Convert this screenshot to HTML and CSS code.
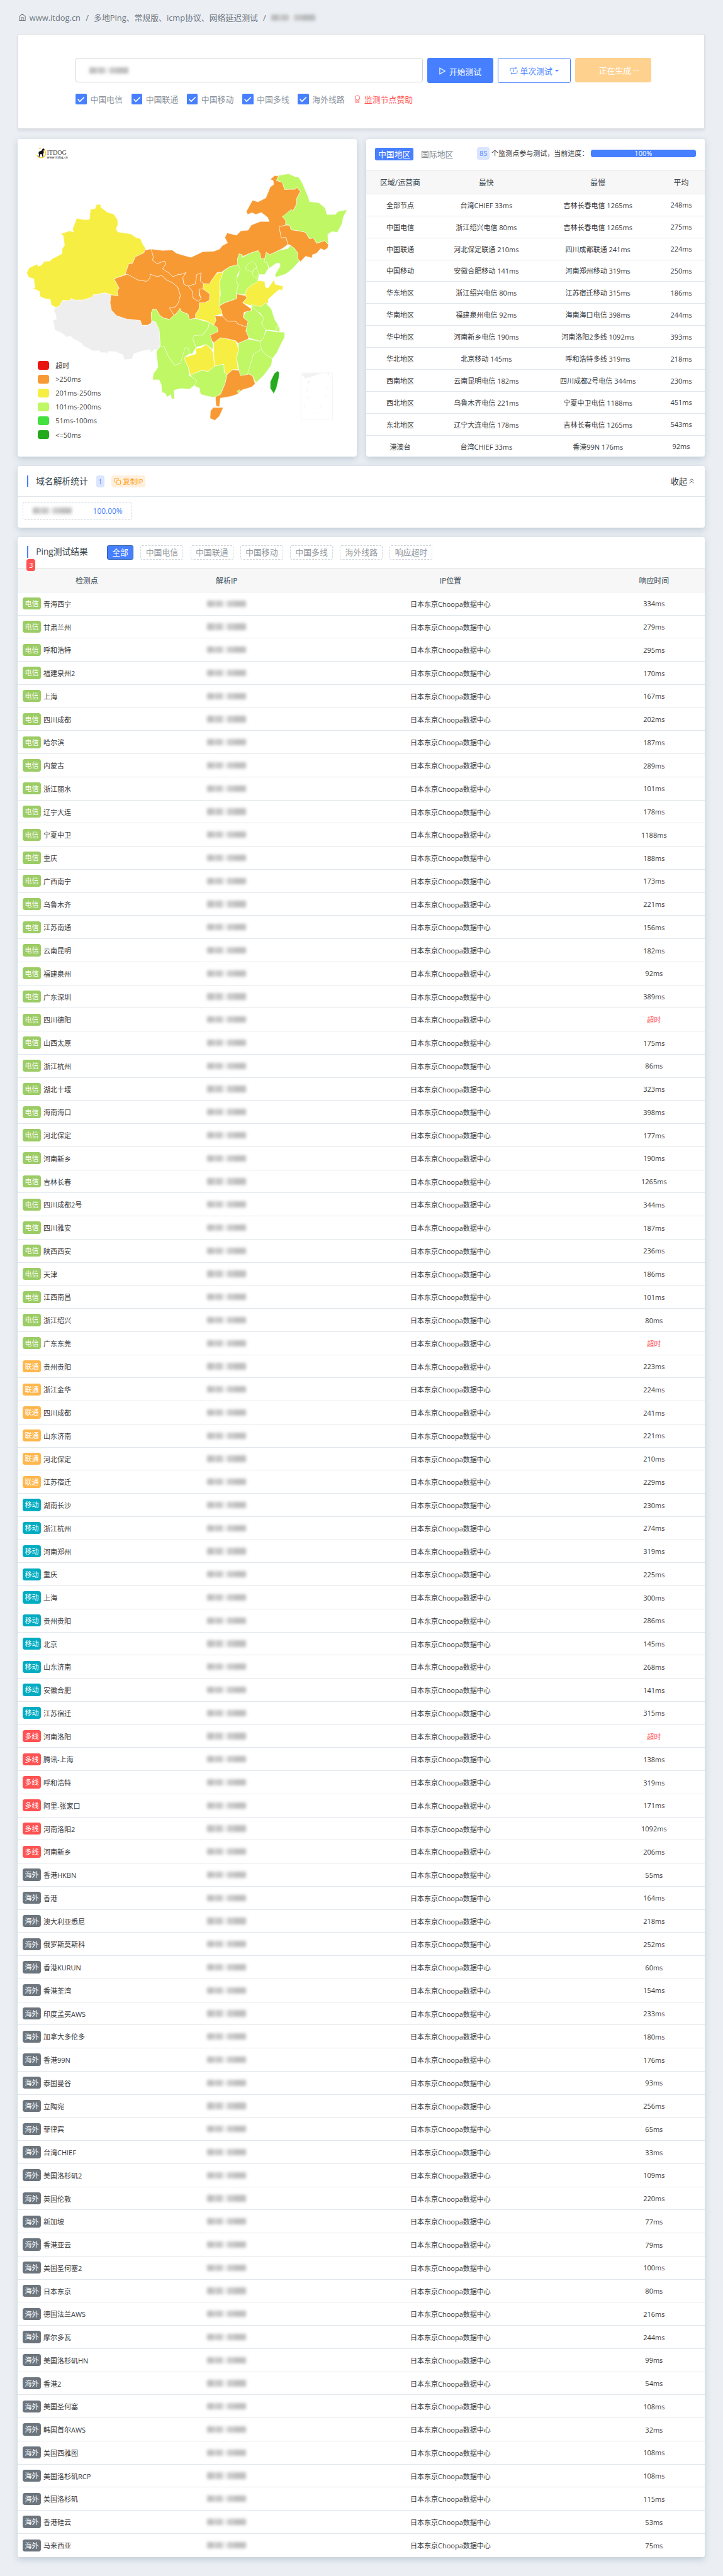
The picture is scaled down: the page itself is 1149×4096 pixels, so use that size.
FILE: index.html
```html
<!DOCTYPE html>
<html lang="zh-CN">
<head>
<meta charset="utf-8">
<title>多地Ping、常规版、icmp协议、网络延迟测试</title>
<link rel="stylesheet" href="styles.css">
</head>
<body>
<div class="page">
  <nav class="crumbs">
    <svg class="home" viewBox="0 0 13 14"><path d="M1 5.5 6.5 1 12 5.5V13H1zM4.7 13V7.5h3.6V13"/></svg>
    <span>www.itdog.cn</span><i>/</i><span>多地Ping、常规版、icmp协议、网络延迟测试</span><i>/</i><b class="smudge wide"></b>
  </nav>

  <section class="card search">
    <div class="bar">
      <div class="input"><b class="smudge"></b></div>
      <button class="btn start"><svg viewBox="0 0 11 12"><path d="M1 .8 10 6 1 11.2z"/></svg>开始测试</button>
      <button class="btn once"><svg viewBox="0 0 14 14"><path d="M1 8V4.500q0-2 2-2h8.500M10 .8l2 1.700-2 1.700M13 6v3.500q0 2-2 2H2.500M4 9.800l-2 1.700 2 1.700M6 5.800l1-.8v4.200"/></svg>单次测试<em></em></button>
      <button class="btn making">正在生成<span>···</span></button>
    </div>
    <div class="checks">
      <label><svg viewBox="0 0 19 19"><path d="m4 9.500 3.500 3.800L15 6"/></svg>中国电信</label>
      <label><svg viewBox="0 0 19 19"><path d="m4 9.500 3.500 3.800L15 6"/></svg>中国联通</label>
      <label><svg viewBox="0 0 19 19"><path d="m4 9.500 3.500 3.800L15 6"/></svg>中国移动</label>
      <label><svg viewBox="0 0 19 19"><path d="m4 9.500 3.500 3.800L15 6"/></svg>中国多线</label>
      <label><svg viewBox="0 0 19 19"><path d="m4 9.500 3.500 3.800L15 6"/></svg>海外线路</label>
      <a class="sponsor"><svg viewBox="0 0 11 15"><circle cx="5.500" cy="5" r="4"/><path d="M2.800 8v6l2.700-1.800L8.200 14V8M2.800 10.800h5.400"/></svg>监测节点赞助</a>
    </div>
  </section>

  <div class="split">
    <section class="card map">
      <svg class="china" viewBox="28 14 1532 1526" preserveAspectRatio="none">
        <g class="gray"><path d="M198 822 215 818 232 788 262 790 270 779 285 787 322 787 365 773 370 762 425 752 450 762 446 800 452 835 475 862 520 878 583 885 590 908 615 908 632 898 635 885 652 893 668 930 673 1000 660 1032 650 1022 632 1040 625 1025 590 1032 553 1045 545 1070 510 1074 505 1050 470 1035 437 1033 433 1058 430 1040 405 1040 395 1030 370 1032 345 1018 325 1008 318 995 275 970 268 960 250 965 230 948 195 930 192 900 186 885 203 880 200 855 192 840z"/></g>
        <g class="yellow">
          <path d="M69 657 80 633 115 615 122 625 135 620 150 601 175 600 183 590 228 565 230 540 240 525 234 478 222 470 263 455 280 461 277 445 295 395 335 402 353 399 357 352 378 348 385 328 405 329 403 340 432 365 463 375 480 402 481 425 474 445 480 460 540 470 565 488 583 492 592 515 607 540 600 560 560 580 548 610 530 614 514 665 464 685 487 730 478 745 482 767 450 762 425 752 370 762 365 773 322 787 285 787 270 779 262 790 232 788 215 818 198 822 180 810 176 784 150 780 130 770 126 745 95 730 107 728 101 685 78 678z"/>
          <path d="M868 708 895 710 915 675 935 655 958 655 942 700 942 800 952 855 920 862 925 885 915 908 895 895 875 885 832 875 832 855 848 830 850 800 875 800 895 788 897 758 865 733z"/>
          <path d="M1055 760 1065 735 1085 715 1115 693 1145 698 1148 725 1160 730 1187 690 1193 712 1228 720 1225 740 1210 737 1190 755 1160 785 1162 800 1130 818 1095 815 1075 812 1045 800 1065 775z"/>
          <path d="M915 992 945 968 985 975 1015 985 1028 1025 1018 1065 1025 1120 1000 1122 975 1145 962 1135 960 1095 918 1105 915 1050z"/>
          <path d="M783 1062 835 1045 832 1020 860 1015 880 1000 905 1025 912 1040 918 1105 890 1130 860 1125 808 1148 800 1110 785 1080z"/>
        </g>
        <g class="orange">
          <path d="M464 685 525 663 545 675 570 690 610 697 625 685 628 663 660 675 680 668 700 690 730 705 752 725 764 765 755 800 742 820 715 825 735 860 715 880 690 875 670 860 655 832 640 830 632 850 634 885 632 898 615 908 590 908 583 885 520 878 475 862 452 835 446 800 450 762 482 767 478 745 487 730z"/>
          <path d="M602 548 632 542 642 582 637 595 658 612 693 600 698 615 683 637 712 657 730 675 752 665 768 663 790 655 775 680 780 712 800 720 818 745 822 778 845 793 858 780 853 765 848 735 865 733 897 758 895 788 875 800 850 800 848 830 832 855 832 875 805 880 798 855 768 842 762 828 748 850 735 860 715 825 742 820 755 800 764 765 752 725 730 705 700 690 680 668 660 675 628 663 625 685 610 697 570 690 545 675 525 663 514 665 530 614 548 610 560 580 600 560z"/>
          <path d="M632 542 683 549 727 547 745 562 780 573 812 582 865 555 915 553 940 543 955 525 977 513 965 487 975 465 1018 476 1037 455 1070 452 1085 427 1125 410 1166 410 1158 390 1130 367 1105 376 1088 368 1068 376 1062 362 1090 308 1115 316 1150 297 1170 245 1186 232 1183 213 1170 208 1190 190 1208 192 1198 213 1225 222 1235 256 1283 255 1290 246 1307 265 1290 300 1290 325 1273 360 1225 387 1240 405 1240 428 1210 435 1220 488 1242 487 1250 520 1225 540 1168 570 1152 558 1146 590 1128 588 1115 550 1080 562 1040 580 1030 565 1022 590 1025 617 985 628 950 653 930 655 905 692 895 710 868 708 853 695 857 657 838 665 832 710 800 720 780 712 775 680 790 655 768 663 752 665 730 675 712 657 683 637 698 615 693 600 658 612 637 595 642 582z"/>
          <path d="M800 720 832 710 838 665 857 657 853 695 868 708 865 733 848 735 850 765 858 780 845 793 822 778 818 745z"/>
          <path d="M1210 435 1240 428 1258 428 1265 450 1300 455 1330 462 1348 493 1365 488 1380 515 1415 502 1433 520 1430 537 1415 548 1398 540 1380 563 1360 570 1360 585 1330 577 1307 603 1295 590 1293 560 1280 540 1262 525 1250 520 1242 487 1220 488z"/>
          <path d="M940 815 965 800 1018 780 1018 758 1055 765 1065 775 1045 800 1085 830 1080 842 1052 845 1048 870 1070 890 1065 918 1020 900 1015 890 975 888 955 865 950 840z"/>
          <path d="M920 862 955 865 975 888 1015 890 1020 900 1065 918 1060 935 1073 965 1070 975 1025 995 1015 983 985 975 945 968 915 992 895 970 898 955 935 935 915 908 925 885z"/>
          <path d="M975 1145 1000 1122 1035 1125 1045 1148 1070 1142 1090 1150 1102 1190 1085 1205 1045 1218 1020 1240 990 1250 945 1258 940 1300 925 1295 922 1250 945 1240 965 1190z"/>
          <path d="M912 1303 958 1303 940 1345 920 1365 898 1355 900 1320z"/>
        </g>
        <g class="lime">
          <path d="M1203 190 1253 181 1283 195 1298 197 1315 225 1340 288 1348 315 1390 320 1418 345 1427 377 1465 376 1475 363 1518 353 1500 390 1495 420 1473 463 1450 458 1430 472 1433 520 1415 502 1380 515 1365 488 1348 493 1330 462 1300 455 1265 450 1258 428 1240 425 1240 405 1225 387 1265 352 1273 360 1290 325 1290 300 1307 265 1290 246 1283 255 1235 256 1225 222 1198 213 1208 195z"/>
          <path d="M1262 525 1280 540 1293 560 1295 590 1302 600 1268 640 1240 662 1195 678 1192 665 1215 625 1213 610 1198 610 1165 635 1158 612 1142 600 1152 558 1168 570 1212 548 1250 540z"/>
          <path d="M1022 590 1030 565 1045 570 1043 583 1080 562 1115 550 1125 565 1128 588 1146 590 1142 600 1158 612 1162 635 1145 665 1120 665 1112 700 1085 715 1065 735 1055 760 1035 762 1016 755 1025 715 1015 690 1030 660 1022 630z"/>
          <path d="M1060 625 1085 600 1105 615 1108 632 1095 640 1090 655 1060 640zM1090 655 1095 640 1108 632 1118 660 1108 683 1092 672z"/>
          <path d="M958 650 985 628 1025 617 1035 640 1020 670 1018 700 1025 715 1016 755 1018 780 965 800 938 815 945 760 942 700z"/>
          <path d="M1085 807 1105 815 1130 818 1148 800 1175 830 1190 880 1210 915 1195 935 1150 930 1130 905 1140 875 1125 850 1095 835zM1195 935 1198 912 1213 918 1213 940z"/>
          <path d="M1058 845 1085 838 1085 815 1120 850 1142 875 1130 900 1150 930 1145 950 1140 970 1125 985 1075 970 1060 935 1070 890 1048 870z"/>
          <path d="M1155 932 1195 940 1235 942 1235 965 1218 1000 1200 1040 1180 1068 1150 1050 1130 1025 1122 990 1140 970 1145 950z"/>
          <path d="M1025 995 1070 975 1125 985 1130 1025 1125 1035 1095 1045 1068 1145 1035 1150 1028 1120 1018 1065 1028 1025z"/>
          <path d="M1130 1025 1150 1050 1180 1068 1175 1100 1140 1150 1105 1185 1090 1150 1068 1140 1095 1045z"/>
          <path d="M640 830 655 832 670 860 690 875 715 880 735 860 748 850 762 828 768 842 798 855 805 880 832 875 895 895 890 920 865 955 820 975 835 1015 818 1045 785 1050 765 1090 738 1100 710 1060 690 1010 672 1020 673 1000 668 930 652 893 634 885 632 850z"/>
          <path d="M895 895 932 920 932 940 898 955 912 1000 910 1025 880 1000 835 1015 820 975 825 958 865 955 890 920z"/>
          <path d="M672 1010 690 1010 710 1060 738 1100 765 1090 785 1015 800 1020 805 1045 783 1062 785 1080 800 1110 805 1150 838 1170 835 1190 805 1215 765 1212 735 1220 737 1262 725 1262 720 1240 705 1253 695 1235 680 1230 678 1195 668 1170 638 1170 642 1140 663 1110 655 1035z"/>
          <path d="M808 1148 860 1125 890 1130 918 1105 960 1095 962 1135 975 1145 965 1190 945 1240 915 1255 885 1248 855 1240 850 1210 828 1200 838 1175z"/>
          <path d="M1020 1225 1030 1218 1038 1225 1025 1232z"/>
        </g>
        <path class="green" d="M1203 1127 1211 1135 1209 1160 1198 1210 1186 1237 1170 1210 1170 1180 1188 1140z"/>
        <path fill="#f2f2f2" d="M1310 1143 1325 1138 1405 1137 1360 1155 1328 1164zM1335 1188 1343 1174 1350 1175 1345 1188zM1425 1138h15l-6 14zM1424 1205h4v14h-4z"/>
        <path fill="none" stroke="#f5f5f5" stroke-width="3" d="M1309 1137h143v222h-143zM1337 1212l2 18M1346 1250l-9 12M1424 1245l-6 14M1324 1290l3 14M1405 1285l-10 20M1370 1330l-8 3M1447 1152l-6 16"/>
      </svg>
      <div class="logo">
        <svg viewBox="0 0 18 19"><path fill="none" stroke="#f2c51d" stroke-width="1.400" d="M13 3.500a8 8 0 1 1-11.500 9.700M5 2.500a8 8 0 0 1 4-1"/><path d="m13 1 .6 2 2 1.500-2.200 1 .2 4.200-1.200 2 .5 4.800h-1.500l-1.400-4.500-2.500.2-1.200 4.800H4.700l.8-4.500-1-2.300 1-2.500 4-1.500z"/></svg>
        <div><strong>ITDOG</strong><small>www.itdog.cn</small></div>
      </div>
      <ul class="legend">
        <li><i style="background:#e9140f"></i>超时</li>
        <li><i style="background:#f89a34"></i>&gt;250ms</li>
        <li><i style="background:#f7ee43"></i>201ms-250ms</li>
        <li><i style="background:#bff765"></i>101ms-200ms</li>
        <li><i style="background:#42e13d"></i>51ms-100ms</li>
        <li><i style="background:#23aa1c"></i>&lt;=50ms</li>
      </ul>
    </section>

    <section class="card area">
      <header>
        <span class="tab on">中国地区</span><span class="tab">国际地区</span>
        <span class="soft">85</span><span class="note">个监测点参与测试，当前进度：</span>
        <div class="progress">100%</div>
      </header>
      <div class="arow ahead"><span>区域/运营商</span><span>最快</span><span>最慢</span><span>平均</span></div>
      <div id="areas"></div>
    </section>
  </div>

  <section class="card stats">
    <header>
      <h2>域名解析统计</h2><span class="soft">1</span>
      <span class="copy"><svg viewBox="0 0 12 12"><path d="M3 7.500H1V1h6.500v2M4.500 4.500H11V11H4.500z"/></svg>复制IP</span>
      <a class="fold">收起<svg viewBox="0 0 9 10"><path d="m1 5 3.500-3.500L8 5M1 9l3.500-3.500L8 9"/></svg></a>
    </header>
    <div class="ipbox"><b class="smudge"></b><span>100.00%</span></div>
  </section>

  <section class="card results">
    <header>
      <h2>Ping测试结果<span class="count">3</span></h2>
      <div class="filters"><span class="on">全部</span><span>中国电信</span><span>中国联通</span><span>中国移动</span><span>中国多线</span><span>海外线路</span><span>响应超时</span></div>
    </header>
    <div class="row rhead"><span>检测点</span><span>解析IP</span><span>IP位置</span><span>响应时间</span></div>
    <div id="rows"></div>
  </section>
</div>
<script src="data.js"></script>
</body>
</html>
```

FILE: styles.css
```css
* { box-sizing: border-box; }
body {
  margin: 0;
  background: #ebeff4;
  font-family: "Open Sans", "Noto Sans CJK SC", sans-serif;
  color: #37393c;
  overflow-x: hidden;
}
.page { zoom: 0.919; width: 1250px; height: 4456px; padding: 0 31px; font-size: 12px; }
svg { fill: none; stroke: currentColor; flex: none; display: block; }
i, em { font-style: normal; }

.card { background: #fff; border-radius: 4px; box-shadow: 0 4px 12px rgba(104, 128, 150, .32); }
.smudge {
  display: block; width: 68px; height: 11px; filter: blur(3px); opacity: .75;
  background: linear-gradient(90deg, #aaa 0 16%, #ccc 18% 22%, #b4b4b4 24% 38%, #eee 42% 50%, #b8b8b8 54% 70%, #aaa 72% 100%);
}

.crumbs { height: 59px; padding: 1px 0 0 2px; display: flex; align-items: center; font-size: 14px; color: #6c757d; }
.crumbs .home { width: 12px; height: 14px; margin-right: 6px; stroke-width: 1.2; }
.crumbs i { width: 23px; text-align: center; }
.crumbs .wide { width: 76px; }

.search { height: 164px; border: 1px solid rgba(0, 0, 0, .125); padding: 40px 91px 0 99px; box-shadow: 0 3px 5px rgba(90, 100, 120, .13); }
.bar { display: flex; gap: 8px; height: 44px; align-items: flex-start; }
.input { width: 600px; height: 43px; border: 1px solid #ced4da; border-radius: 4px; padding: 0 22px; display: flex; align-items: center; }
.btn { height: 44px; border: 1px solid #467fff; border-radius: 3px; padding: 0; font: 14px "Open Sans", "Noto Sans CJK SC", sans-serif; display: flex; align-items: center; justify-content: center; }
.start { width: 114px; background: #467fff; color: #fff; gap: 6px; padding-top: 2px; }
.start svg { width: 11px; height: 13px; stroke-width: 1.3; }
.once { width: 126px; background: #fff; color: #467fff; gap: 4px; }
.once svg { width: 14px; height: 14px; }
.once em { border: 4px solid transparent; border-top-color: #467fff; border-bottom: 0; margin-left: 1px; }
.making { width: 131px; height: 43px; background: #ffd18f; border-color: #ffd18f; color: #fff; padding-left: 20px; gap: 3px; }
.checks { display: flex; margin-top: 18px; height: 19px; align-items: center; font-size: 14px; color: #8c949c; }
.checks label { width: 96px; display: flex; align-items: center; gap: 6px; }
.checks label svg { width: 19px; height: 19px; background: #467fff; border-radius: 2px; color: #fff; stroke-width: 1.8; }
.sponsor { display: flex; align-items: center; gap: 6px; color: #ff5252; margin-left: 2px; }
.sponsor svg { width: 11px; height: 15px; }

.split { display: grid; grid-template-columns: 586px 586px; gap: 16px; margin-top: 17px; height: 550px; }
.map { position: relative; }
.china { width: 586px; height: 550px; stroke: rgba(255, 255, 255, .65); stroke-width: 2.5; stroke-linejoin: round; }
.gray { fill: #eee; }
.yellow { fill: #f7ee43; }
.orange { fill: #f89a34; }
.lime { fill: #bff765; }
.green { fill: #26aa1e; }
.logo { position: absolute; left: 31px; top: 15px; display: flex; gap: 1px; }
.logo svg { width: 18px; height: 19px; fill: #111; stroke: none; }
.logo strong { display: block; font: 11px/11px "Liberation Serif", serif; margin-top: 4px; color: #444; }
.logo small { display: block; font: bold 5px/5px "Open Sans", sans-serif; letter-spacing: .2px; color: #555; }
.legend { position: absolute; left: 34px; top: 380px; margin: 0; padding: 0; list-style: none; }
.legend li { height: 24px; display: flex; align-items: center; gap: 11px; color: #444; }
.legend i { width: 20px; height: 15px; border-radius: 4px; }

.area { overflow: hidden; box-shadow: none; }
.split .area { box-shadow: 0 4px 12px rgba(104, 128, 150, .32); }
.area header { height: 55px; border-bottom: 1px solid #e3e8ee; display: flex; align-items: flex-start; padding: 15px 16px; }
.tab { height: 22px; line-height: 22px; width: 66px; text-align: center; border-radius: 3px; font-size: 14px; color: #868e96; margin-top: 1px; }
.tab.on { background: #467fff; color: #fff; margin-right: 8px; }
.soft { height: 21px; line-height: 21px; padding: 0 4px; border-radius: 4px; background: #dae5ff; color: #5c8cff; }
.area .soft { margin-left: 36px; width: 22px; text-align: center; white-space: nowrap; }
.note { line-height: 21px; margin-left: 3px; width: 172px; white-space: nowrap; }
.progress { flex: 1; height: 13px; line-height: 13px; margin-top: 4px; border-radius: 4px; background: #467fff; color: #fff; text-align: center; }
.arow { display: grid; grid-template-columns: 118px 180px 206px 82px; height: 38px; align-items: center; text-align: center; border-bottom: 1px solid #e1e7ec; }
.ahead, .rhead { background: #f7f7f8; color: #37474f; font-size: 13px; }
.ahead { height: 41px; }

.stats { margin-top: 16px; height: 107px; }
.stats header { height: 54px; border-bottom: 1px solid #e1e6eb; display: flex; align-items: center; padding: 0 19px 0 16px; }
h2 { margin: 0; font-size: 15px; font-weight: 400; line-height: 20px; color: #37474f; border-left: 3px solid #467fff; padding-left: 13px; white-space: nowrap; }
.stats .soft { margin: 1px 12px 0 14px; }
.copy { display: flex; align-items: center; gap: 3px; height: 21px; padding: 0 4px; margin-top: 1px; border-radius: 4px; background: #fff0de; color: #ff9f1a; }
.copy svg { width: 13px; height: 12px; }
.fold { margin-left: auto; display: flex; align-items: center; gap: 3px; font-size: 14px; }
.fold svg { width: 9px; height: 10px; }
.ipbox { margin: 8px; width: 190px; height: 32px; border: 1px dashed #ced4da; border-radius: 4px; display: flex; align-items: center; justify-content: space-between; padding: 0 16px; color: #467fff; font-size: 13px; }

.results { margin-top: 16px; height: 3495px; overflow: visible; }
.results header { height: 55px; border-bottom: 2px solid #e1e6eb; display: flex; align-items: flex-start; padding: 15px 16px; }
.results h2 { position: relative; width: 108px; margin-top: 1px; }
.count { position: absolute; left: -3px; top: 22px; width: 15px; height: 21px; border-radius: 4px; background: #ff5252; color: #fff; font-size: 12px; line-height: 21px; text-align: center; }
.filters { display: flex; gap: 12.200px; margin-left: 30px; }
.filters span { width: 74px; height: 25px; line-height: 23px; border: 1px dashed #ced4da; border-radius: 3px; text-align: center; font-size: 14px; color: #9299a0; }
.filters .on { width: 46px; background: #467fff; border: 1px solid #2e60ad; color: #fff; }
.row { display: grid; grid-template-columns: 238px 246px 528px 176px; height: 40px; align-items: center; text-align: center; border-bottom: 1px solid #e1e7ec; }
.rhead { height: 41px; }
.row:last-child { border-bottom: 0; }
.row .smudge { margin: 0 auto; }
.point { display: flex; align-items: center; gap: 4px; padding-left: 8px; text-align: left; white-space: nowrap; }
.tag { width: 32px; height: 21px; line-height: 21px; border-radius: 4px; text-align: center; color: #fff; }
.ct { background: #9ccc65; }
.cu { background: #ffb74d; }
.cm { background: #00acc1; }
.mx { background: #ff5252; }
.os { background: #6c757d; }
.late { color: #ff5252; }
```

FILE: data.js
```js
const areas = [
  ["全部节点", "台湾CHIEF 33ms", "吉林长春电信 1265ms", "248ms"],
  ["中国电信", "浙江绍兴电信 80ms", "吉林长春电信 1265ms", "275ms"],
  ["中国联通", "河北保定联通 210ms", "四川成都联通 241ms", "224ms"],
  ["中国移动", "安徽合肥移动 141ms", "河南郑州移动 319ms", "250ms"],
  ["华东地区", "浙江绍兴电信 80ms", "江苏宿迁移动 315ms", "186ms"],
  ["华南地区", "福建泉州电信 92ms", "海南海口电信 398ms", "244ms"],
  ["华中地区", "河南新乡电信 190ms", "河南洛阳2多线 1092ms", "393ms"],
  ["华北地区", "北京移动 145ms", "呼和浩特多线 319ms", "218ms"],
  ["西南地区", "云南昆明电信 182ms", "四川成都2号电信 344ms", "230ms"],
  ["西北地区", "乌鲁木齐电信 221ms", "宁夏中卫电信 1188ms", "451ms"],
  ["东北地区", "辽宁大连电信 178ms", "吉林长春电信 1265ms", "543ms"],
  ["港澳台", "台湾CHIEF 33ms", "香港99N 176ms", "92ms"]
];
// Each group: label, tag class, "name time" pairs; a time of 0 is a timeout.
const groups = [
  ["电信", "ct", "青海西宁 334,甘肃兰州 279,呼和浩特 295,福建泉州2 170,上海 167,四川成都 202,哈尔滨 187,内蒙古 289,浙江丽水 101,辽宁大连 178,宁夏中卫 1188,重庆 188,广西南宁 173,乌鲁木齐 221,江苏南通 156,云南昆明 182,福建泉州 92,广东深圳 389,四川德阳 0,山西太原 175,浙江杭州 86,湖北十堰 323,海南海口 398,河北保定 177,河南新乡 190,吉林长春 1265,四川成都2号 344,四川雅安 187,陕西西安 236,天津 186,江西南昌 101,浙江绍兴 80,广东东莞 0"],
  ["联通", "cu", "贵州贵阳 223,浙江金华 224,四川成都 241,山东济南 221,河北保定 210,江苏宿迁 229"],
  ["移动", "cm", "湖南长沙 230,浙江杭州 274,河南郑州 319,重庆 225,上海 300,贵州贵阳 286,北京 145,山东济南 268,安徽合肥 141,江苏宿迁 315"],
  ["多线", "mx", "河南洛阳 0,腾讯-上海 138,呼和浩特 319,阿里-张家口 171,河南洛阳2 1092,河南新乡 206"],
  ["海外", "os", "香港HKBN 55,香港 164,澳大利亚悉尼 218,俄罗斯莫斯科 252,香港KURUN 60,香港荃湾 154,印度孟买AWS 233,加拿大多伦多 180,香港99N 176,泰国曼谷 93,立陶宛 256,菲律宾 65,台湾CHIEF 33,美国洛杉矶2 109,英国伦敦 220,新加坡 77,香港亚云 79,美国圣何塞2 100,日本东京 80,德国法兰AWS 216,摩尔多瓦 244,美国洛杉矶HN 99,香港2 54,美国圣何塞 108,韩国首尔AWS 32,美国西雅图 108,美国洛杉矶RCP 108,美国洛杉矶 115,香港硅云 53,马来西亚 75"]
];
document.getElementById("areas").innerHTML = areas
  .map(r => `<div class="arow">${r.map(c => `<span>${c}</span>`).join("")}</div>`).join("");
document.getElementById("rows").innerHTML = groups
  .flatMap(([label, cls, list]) => list.split(",").map(item => {
    const [name, ms] = item.split(" ");
    const time = ms === "0" ? '<span class="late">超时</span>' : `<span>${ms}ms</span>`;
    return `<div class="row"><span class="point"><span class="tag ${cls}">${label}</span>${name}</span><b class="smudge"></b><span>日本东京Choopa数据中心</span>${time}</div>`;
  })).join("");
```
